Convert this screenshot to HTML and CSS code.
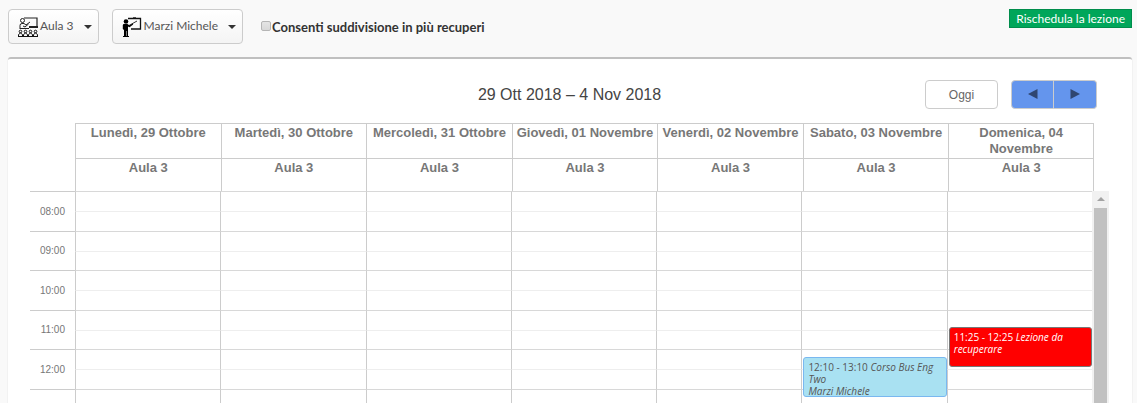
FILE: index.html
```
<!DOCTYPE html>
<html lang="it">
  <head>
    <meta charset="UTF-8">
    <title>Calendario lezioni</title>
    <link rel="stylesheet" href="styles.css">
  </head>
  <body>
    <div class="toolbar">
      <button type="button" class="btn dropdown">
        <svg class="icon" width="20" height="20" viewBox="0 0 20 20" fill="none" stroke="#222">
          <path d="M6 1h13v10" stroke-width="1.200"/>
          <circle cx="4.500" cy="3.500" r="2"/>
          <path d="M2 12V8.500q0-2 2-2h2l2 1.500 4-3M5 9l2 1 3.500-3M2 11.500h9" stroke-width="1"/>
          <path d="M11 10h9" stroke-width="2"/>
          <g stroke="#111">
            <circle cx="2.500" cy="14.500" r="1.300"/><circle cx="7.500" cy="14.500" r="1.300"/><circle cx="12.500" cy="14.500" r="1.300"/><circle cx="17.500" cy="14.500" r="1.300"/>
            <path d="M.5 19v-1.500q2-3 4 0v1.500M5.500 19v-1.500q2-3 4 0v1.500M10.500 19v-1.500q2-3 4 0v1.500M15.500 19v-1.500q2-3 4 0v1.500M0 19.500h20"/>
          </g>
        </svg>
        <span>Aula 3</span>
        <span class="caret"></span>
      </button>
      <button type="button" class="btn dropdown">
        <svg class="icon" width="20" height="20" viewBox="0 0 20 20">
          <path d="M6 1.500h12.500v10.500H9M11 1h3" fill="none" stroke="#111" stroke-width="1.300"/>
          <path d="M7 8.500l8-4.500" stroke="#333" stroke-width="1"/>
          <circle cx="4" cy="4.500" r="2.300"/>
          <path d="M1.500 7h4l2 1.500 3-2 .7 1-3.700 2.800L6 9.500V19.500H4.500V14H4v5.500H2V13L.8 12V8z"/>
          <path d="M1 19h6v1H1z"/>
        </svg>
        <span>Marzi Michele</span>
        <span class="caret"></span>
      </button>
      <label class="split"><input type="checkbox">Consenti suddivisione in più recuperi</label>
      <button type="button" class="btn-success">Rischedula la lezione</button>
    </div>

    <div class="box">
      <div class="cal-header">
        <h2>29 Ott 2018 – 4 Nov 2018</h2>
        <div class="cal-buttons">
          <button type="button" class="today">Oggi</button>
          <div class="group">
            <button type="button" aria-label="Precedente"><svg width="10" height="10" viewBox="0 0 10 10"><path d="M9.500 0v10L0 5z"/></svg></button>
            <button type="button" aria-label="Successivo"><svg width="10" height="10" viewBox="0 0 10 10"><path d="M.5 0v10L10 5z"/></svg></button>
          </div>
        </div>
      </div>

      <table class="days">
        <tr>
          <td class="axis"></td>
          <th>Lunedì, 29 Ottobre</th>
          <th>Martedì, 30 Ottobre</th>
          <th>Mercoledì, 31 Ottobre</th>
          <th>Giovedì, 01 Novembre</th>
          <th>Venerdì, 02 Novembre</th>
          <th>Sabato, 03 Novembre</th>
          <th>Domenica, 04 Novembre</th>
        </tr>
        <tr>
          <td class="axis"></td>
          <th>Aula 3</th>
          <th>Aula 3</th>
          <th>Aula 3</th>
          <th>Aula 3</th>
          <th>Aula 3</th>
          <th>Aula 3</th>
          <th>Aula 3</th>
        </tr>
      </table>

      <div class="scroller">
        <table class="slots">
          <tr><th class="axis" rowspan="2">08:00</th><td></td><td></td><td></td><td></td><td></td><td></td><td></td></tr>
          <tr class="half"><td></td><td></td><td></td><td></td><td></td><td></td><td></td></tr>
          <tr><th class="axis" rowspan="2">09:00</th><td></td><td></td><td></td><td></td><td></td><td></td><td></td></tr>
          <tr class="half"><td></td><td></td><td></td><td></td><td></td><td></td><td></td></tr>
          <tr><th class="axis" rowspan="2">10:00</th><td></td><td></td><td></td><td></td><td></td><td></td><td></td></tr>
          <tr class="half"><td></td><td></td><td></td><td></td><td></td><td></td><td></td></tr>
          <tr>
            <th class="axis" rowspan="2">11:00</th><td></td><td></td><td></td><td></td><td></td><td></td>
            <td><a href="#" class="event missed">11:25 - 12:25 <i>Lezione da recuperare</i></a></td>
          </tr>
          <tr class="half"><td></td><td></td><td></td><td></td><td></td><td></td><td></td></tr>
          <tr>
            <th class="axis" rowspan="2">12:00</th><td></td><td></td><td></td><td></td><td></td>
            <td><a href="#" class="event course">12:10 - 13:10 <i>Corso Bus Eng Two<br>Marzi Michele</i></a></td>
            <td></td>
          </tr>
          <tr class="half"><td></td><td></td><td></td><td></td><td></td><td></td><td></td></tr>
          <tr><th class="axis" rowspan="2"></th><td></td><td></td><td></td><td></td><td></td><td></td><td></td></tr>
          <tr class="half"><td></td><td></td><td></td><td></td><td></td><td></td><td></td></tr>
        </table>
        <div class="scrollbar"><span class="up"></span><span class="thumb"></span></div>
      </div>
    </div>
  </body>
</html>
```
FILE: styles.css
```
* { box-sizing: border-box; }
body { margin: 0; padding: 9px 5px 0 8px; height: 100vh; display: flex; flex-direction: column; overflow: hidden; background: #f9f9f9; color: #333; font: 12px/20px Lato, sans-serif; }
button { font-family: inherit; cursor: pointer; }

/* toolbar */
.toolbar { display: flex; align-items: flex-start; height: 48px; flex: none; }
.btn { display: flex; align-items: center; height: 35px; margin-right: 13px; padding: 0 6px 0 9px; border: 1px solid #ccc; border-radius: 4px; background: linear-gradient(#fff, #f4f4f4); color: #555; font-size: 12px; white-space: nowrap; }
.btn .icon { margin-right: 2px; }
.btn span { margin-bottom: 2px; }
.btn .caret { margin: 0 0 0 10px; border: 4px solid transparent; border-top-color: #333; border-bottom: 0; }
.split { display: flex; align-items: center; height: 35px; margin-left: 5px; font-size: 13px; font-weight: 700; }
.split input { appearance: none; width: 10px; height: 10px; margin: 0 1px 2px 0; border: 1px solid #b5b5b5; border-radius: 2px; background: linear-gradient(#e4e4e4, #d8d8d8); }
.btn-success { margin-left: auto; height: 19px; padding: 0 6px; border: 1px solid #008d4c; background: #00a65a; color: #fff; font-size: 12px; line-height: 16px; }

/* calendar */
.box { flex: 1; min-height: 0; display: flex; flex-direction: column; padding: 21px 23px 0 22px; border-top: 2px solid #c0c0c0; border-radius: 3px 3px 0 0; background: #fff; box-shadow: 0 1px 1px 1px rgba(0, 0, 0, .03); font-family: "Liberation Sans", sans-serif; }
.cal-header { display: grid; grid-template-columns: 1fr auto 1fr; align-items: center; margin-bottom: 14px; }
.cal-header h2 { grid-column: 2; margin: 0; color: #444; font-size: 16px; font-weight: 400; }
.cal-buttons { display: flex; justify-content: flex-end; padding-right: 12px; }
.cal-buttons button { height: 29px; padding: 0; border: 1px solid #ccc; }
.cal-buttons .today { width: 73px; margin-right: 13px; border-radius: 4px; background: #fff; color: #666; font-size: 12px; }
.group { display: flex; }
.group button { width: 43px; background: #6495ed; }
.group button:first-child { border-radius: 4px 0 0 4px; }
.group button:last-child { border-left: 0; border-radius: 0 4px 4px 0; }
.group svg { fill: #2f4671; }

table { table-layout: fixed; border-spacing: 0; }
th, td { padding: 0; }
.axis { width: 45px; }
.days { flex: none; width: calc(100% - 15px); color: #777; font-size: 13px; line-height: 16px; }
.days tr { height: 35px; }
.days tr:last-child { height: 33px; }
.days th { padding: 1px 0 0; border: 1px solid #ccc; border-width: 1px 0 0 1px; vertical-align: top; }
.days th:last-child { border-right-width: 1px; }

.scroller { flex: 1; min-height: 0; display: flex; overflow: hidden; }
.slots { flex: 1; height: 0; }
.slots tr { height: 20px; }
.slots tr:nth-child(4n) { height: 19px; }
.slots .axis { padding-right: 10px; border-top: 1px solid #ccc; color: #777; font-size: 10px; font-weight: 400; line-height: 12px; text-align: right; }
.slots td { position: relative; border-top: 1px solid #d8d8d8; border-left: 1px solid #ccc; }
.slots .half td { border-top-color: #eee; }
.event { position: absolute; z-index: 1; left: 1px; right: 0; height: 40px; padding: 3px 4px 0; border: 1px solid; border-radius: 3px; overflow: hidden; font: 10px/12px "Open Sans", sans-serif; text-decoration: none; }
.missed { top: 16px; border-color: #777; background: #f00; color: #fff; }
.course { top: 7px; border-color: #7ab8f0; background: #a9e1f2; color: #555; }

.scrollbar { display: flex; flex-direction: column; align-items: center; width: 17px; padding-top: 6px; background: #f1f1f1; }
.scrollbar .up { border: 4px solid transparent; border-top: 0; border-bottom-color: #a3a3a3; }
.scrollbar .thumb { flex: 1; width: 13px; margin-top: 7px; background: #c1c1c1; }
```
